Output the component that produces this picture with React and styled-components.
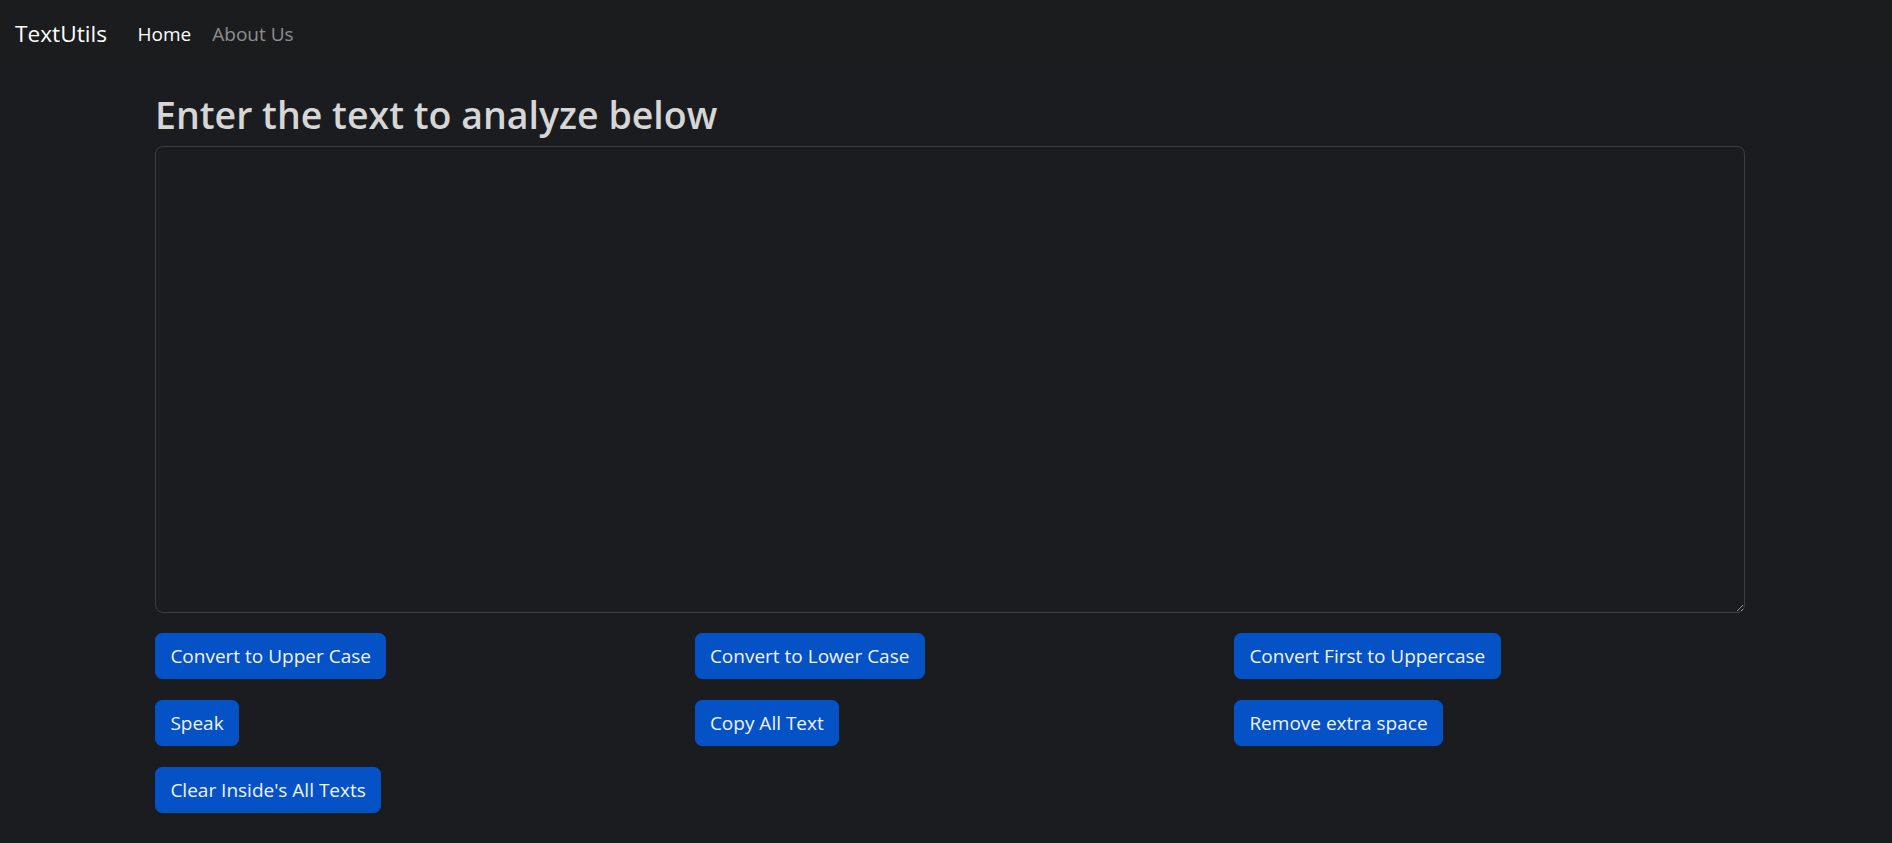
import React, { useState } from 'react'
import styled, { createGlobalStyle } from 'styled-components'

const GlobalStyle = createGlobalStyle`
  html, body {
    margin: 0;
    padding: 0;
    background: #1b1c1f;
  }
  body {
    font-family: 'Open Sans', 'Noto Sans', sans-serif;
    color: #dee2e6;
  }
  * { box-sizing: border-box; }
`

const Nav = styled.nav`
  height: 67px;
  display: flex;
  align-items: center;
  padding: 0 15px;
  background: #1b1c1e;
`

const Brand = styled.a`
  font-size: 22.7px;
  color: #fff;
  margin-right: 20px;
  text-decoration: none;
`

const NavLink = styled.a`
  font-size: 19px;
  padding: 0 10.5px;
  color: ${({ active }) => (active ? '#fff' : 'rgba(255,255,255,0.5)')};
  text-decoration: none;
`

const Main = styled.main`
  width: 1590px;
  margin-left: 155px;
  padding-top: 25px;
`

const Heading = styled.h2`
  margin: 0 0 9px;
  font-size: 37.5px;
  font-weight: 600;
  line-height: 1.2;
  color: #d6d6d6;
`

const TextBox = styled.textarea`
  display: block;
  width: 100%;
  height: 467px;
  margin: 0;
  padding: 7px 14px;
  background: #1b1c1f;
  color: #dee2e6;
  border: 1.2px solid #3c3d40;
  border-radius: 8px;
  font-family: inherit;
  font-size: 19px;
  outline: none;
`

const Actions = styled.div`
  display: grid;
  grid-template-columns: repeat(3, 1fr);
  column-gap: 28.5px;
  row-gap: 21px;
  margin-top: 20px;
`

const Button = styled.button`
  justify-self: start;
  height: 46px;
  padding: 0 14.4px;
  background: #0452c6;
  border: 1.2px solid #0452c6;
  border-radius: 7px;
  color: #f2f2f2;
  font-family: inherit;
  font-size: 19px;
  cursor: pointer;
`

const actions = [
  'Convert to Upper Case',
  'Convert to Lower Case',
  'Convert First to Uppercase',
  'Speak',
  'Copy All Text',
  'Remove extra space',
  "Clear Inside's All Texts",
]

const App = () => {
  const [text, setText] = useState('')

  return (
    <>
      <GlobalStyle />
      <Nav>
        <Brand href="#">TextUtils</Brand>
        <NavLink href="#" active>Home</NavLink>
        <NavLink href="#">About Us</NavLink>
      </Nav>
      <Main>
        <Heading>Enter the text to analyze below</Heading>
        <TextBox value={text} onChange={e => setText(e.target.value)} />
        <Actions>
          {actions.map(label => (
            <Button key={label}>{label}</Button>
          ))}
        </Actions>
      </Main>
    </>
  )
}

export default App
